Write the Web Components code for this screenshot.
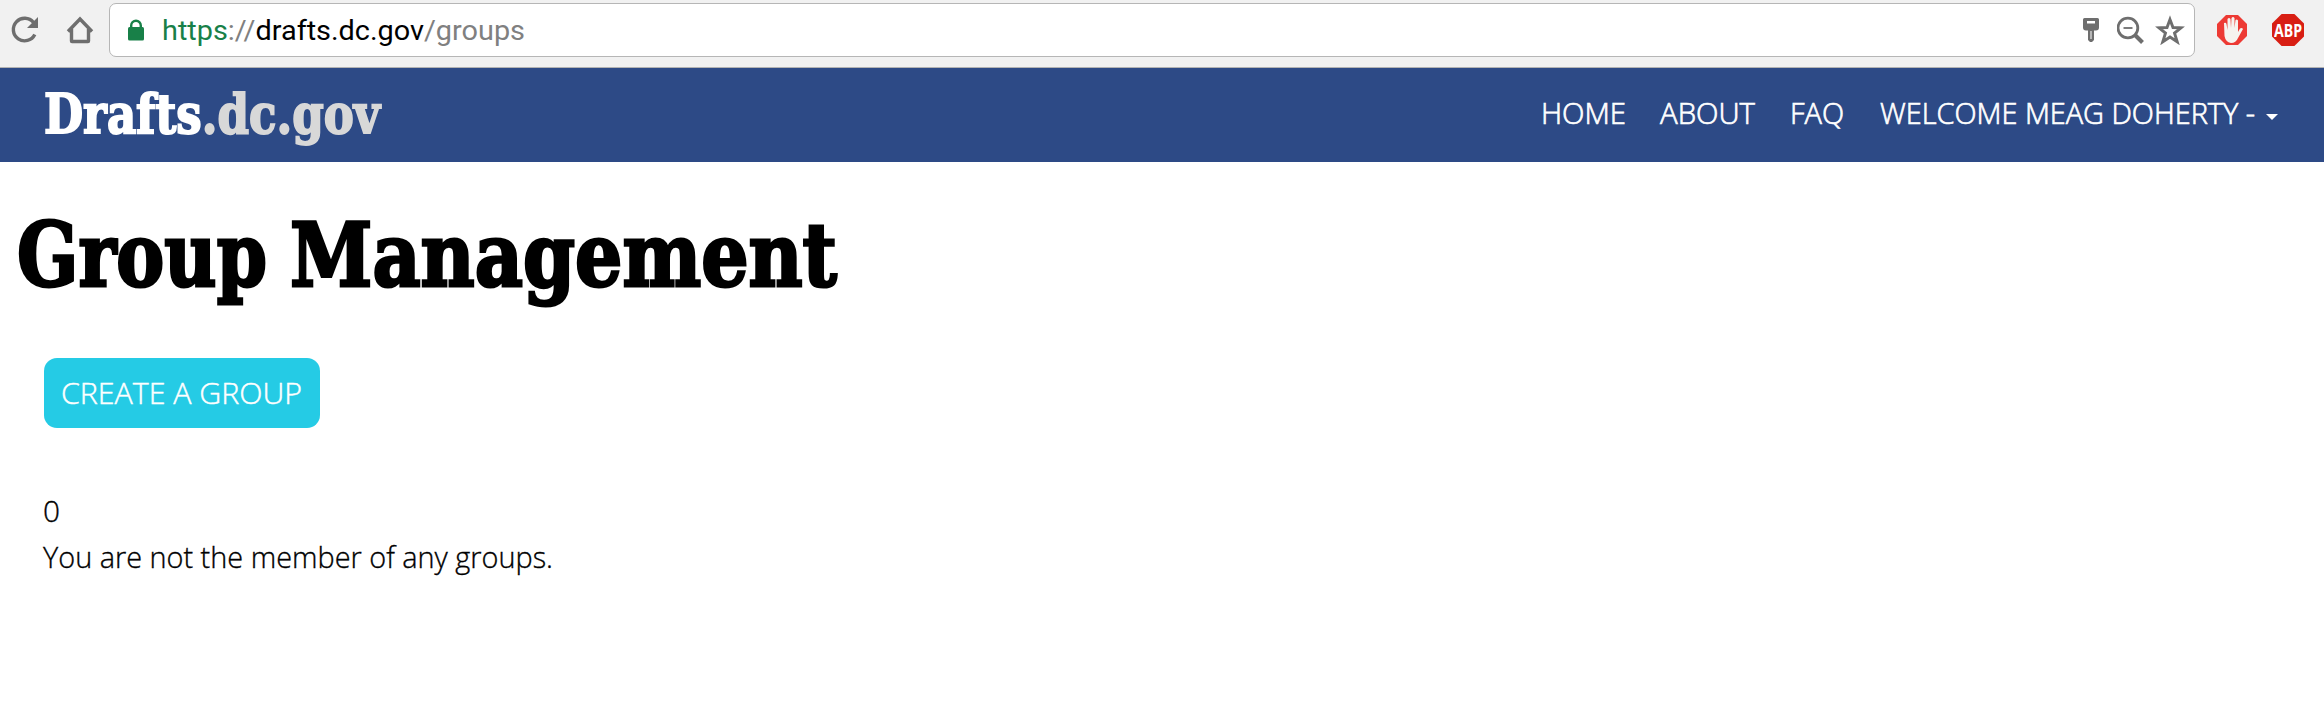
<!DOCTYPE html>
<html lang="en">
<head>
<meta charset="utf-8">
<title>Group Management</title>
<style>
html,body{margin:0;background:#fff;color:#000;font-family:"Open Sans",sans-serif;height:714px;overflow:hidden}
</style>
</head>
<body>
<groups-page></groups-page>
<script>
class FitText extends HTMLElement{
  connectedCallback(){
    const root=this.attachShadow({mode:'open'});
    root.innerHTML='<style>:host{display:block;white-space:pre}span{display:inline-block;transform-origin:0 50%}</style><span><slot></slot></span>';
    const w=+this.getAttribute('width');
    this.style.width=w+'px';
    const s=root.querySelector('span');
    s.style.transform='scaleX('+w/s.getBoundingClientRect().width+')';
  }
}
class BrowserBar extends HTMLElement{
  connectedCallback(){
    this.attachShadow({mode:'open'}).innerHTML=`
<style>
:host{display:flex;box-sizing:border-box;height:68px;background:#f1f1f1;border-bottom:1px solid #b3b3b3;padding:3px 20px 0 11px;align-items:flex-start}
svg{display:block;flex:none}
.i{margin-top:11px}
.box{box-sizing:border-box;flex:none;width:2086px;height:54px;margin-left:15px;border:1px solid #b6b6b6;border-radius:7px;background:#fff;display:flex;align-items:center;padding:0 9px 0 18px}
.url{font:28px/52px Roboto,sans-serif;color:#808080;margin:2px 0 0 18px;flex:1}
.s{color:#188048}.h{color:#000}
.abp{display:flex;justify-content:center;width:32px;height:32px;margin:11px 0 0 25px;background:#d81e13;clip-path:polygon(30% 0,70% 0,100% 30%,100% 70%,70% 100%,30% 100%,0 70%,0 30%);color:#fff;font:bold 18px/32px "Open Sans",sans-serif}
</style>
<svg class="i" width="28" height="32" viewBox="0 0 28 32"><path d="M22.500 8.500A11.300 11.300 0 1 0 23.800 20.500" fill="none" stroke="#6e6e6e" stroke-width="3.400"/><path d="M27 3v11H16z" fill="#6e6e6e"/></svg>
<svg class="i" style="margin-left:27px" width="28" height="32" viewBox="0 0 28 32"><path d="M2 17.500 14 5l12 12.500M5.500 15v12q0 .5.5.5h16q.5 0 .5-.5V15" fill="none" stroke="#6e6e6e" stroke-width="3.400"/></svg>
<div class="box">
<svg width="16" height="22" viewBox="0 0 16 22"><path d="M3.200 9V6.500a4.800 4.800 0 0 1 9.600 0V9" fill="none" stroke="#188048" stroke-width="2.400"/><rect y="8" width="16" height="13.500" rx="1.500" fill="#188048"/></svg>
<div class="url"><fit-text width="363"><span class="s">https</span>://<span class="h">drafts.dc.gov</span>/groups</fit-text></div>
<svg style="margin-right:1px" width="16" height="26" viewBox="0 0 16 26"><path fill="#6e6e6e" fill-rule="evenodd" d="M1.500 1h13q1.500 0 1.500 1.500v8q0 3-3 3h-2V23l-2 2H7l-2-2v-9.500H3q-3 0-3-3v-8Q0 1 1.500 1zM4 4v2.500h8V4zM7.500 14v8h1v-8z"/></svg>
<svg style="margin-left:17px" width="29" height="30" viewBox="0 0 29 30"><circle cx="10.900" cy="13" r="9.900" fill="none" stroke="#6e6e6e" stroke-width="2.800"/><path d="M6.500 13h9" stroke="#6e6e6e" stroke-width="1.800"/><path d="m17.500 19.500 8 8" stroke="#6e6e6e" stroke-width="4"/></svg>
<svg style="margin-left:9px" width="30" height="30" viewBox="0 0 30 30"><path d="m15 4.500 3 8 8 .3-6.500 5.200 2.700 8.800-7.200-4.800-7.200 4.800L10.500 18 4 12.800l8-.3z" fill="none" stroke="#6e6e6e" stroke-width="2.900"/></svg>
</div>
<svg style="margin:12px 0 0 22px" width="30" height="30" viewBox="0 0 30 30"><path d="M9 0h12l9 9v12l-9 9H9l-9-9V9z" fill="#ed3a34"/><path d="M7 8q2-1 2.500 1l1 6V4q1.500-2 3 0l.5 9 .5-10q1.500-2 3 0v10l1-8q1.500-1 2.500.5V17l2-3.500q2-1 3 .5L21 23q-2 5-7 5-5.500-1-6.500-7z" fill="#f6f3ef"/></svg>
<div class="abp"><fit-text width="28">ABP</fit-text></div>`;
  }
}
class SiteHeader extends HTMLElement{
  connectedCallback(){
    this.attachShadow({mode:'open'}).innerHTML=`
<style>
:host{display:flex;box-sizing:border-box;height:94px;background:#2d4a86;padding:0 46px 0 44px;justify-content:space-between;color:#fff}
.logo{font:bold 55px/92px "DejaVu Serif",serif;-webkit-text-stroke:2px}
.logo span{color:#d8d8d8}
nav{display:flex;font:300 30px/90px "Open Sans",sans-serif;-webkit-text-stroke:.7px}
.c{width:0;height:0;border:6px solid transparent;border-top-color:#fff;border-bottom:0;margin:46px 0 0 11px}
</style>
<div class="logo"><fit-text width="336">Drafts<span>.dc.gov</span></fit-text></div>
<nav><fit-text style="margin-right:34px" width="85">HOME</fit-text><fit-text style="margin-right:35px" width="95">ABOUT</fit-text><fit-text style="margin-right:36px" width="54">FAQ</fit-text><fit-text width="375">WELCOME MEAG DOHERTY -</fit-text><i class="c"></i></nav>`;
  }
}
class ActionButton extends HTMLElement{
  connectedCallback(){
    this.attachShadow({mode:'open'}).innerHTML=`
<style>:host{display:flex;box-sizing:border-box;width:276px;height:70px;padding-left:17px;border-radius:13px;background:#25cbe5;color:#fff;font:300 30px/70px "Open Sans",sans-serif;-webkit-text-stroke:.45px}</style><fit-text width="241"><slot></slot></fit-text>`;
  }
}
class GroupsPage extends HTMLElement{
  connectedCallback(){
    this.attachShadow({mode:'open'}).innerHTML=`
<style>
:host{display:block}
h1{display:flex;gap:23px;margin:40px 0 0 17px;font:bold 88px/106px "DejaVu Serif",serif;-webkit-text-stroke:3px}
action-button{margin:50px 0 0 44px}
.t{margin:60px 0 0 43px;font:300 30px/46px "Open Sans",sans-serif;-webkit-text-stroke:.35px}
</style>
<browser-bar></browser-bar><site-header></site-header>
<h1><fit-text width="250">Group</fit-text><fit-text width="547">Management</fit-text></h1>
<action-button>CREATE A GROUP</action-button>
<div class="t"><fit-text width="17">0</fit-text><fit-text width="510">You are not the member of any groups.</fit-text></div>`;
  }
}
customElements.define('fit-text',FitText);
customElements.define('browser-bar',BrowserBar);
customElements.define('site-header',SiteHeader);
customElements.define('action-button',ActionButton);
customElements.define('groups-page',GroupsPage);
</script>
</body>
</html>
